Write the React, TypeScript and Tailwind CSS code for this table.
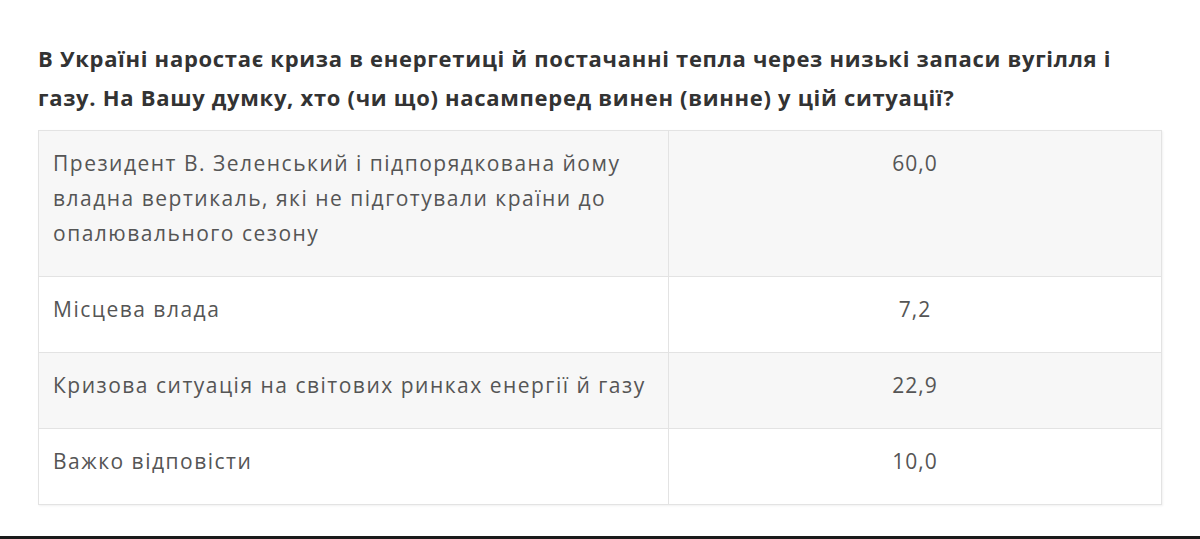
const rows = [
  {
    label: 'Президент В. Зеленський і підпорядкована йому владна вертикаль, які не підготували країни до опалювального сезону',
    value: '60,0',
  },
  { label: 'Місцева влада', value: '7,2' },
  { label: 'Кризова ситуація на світових ринках енергії й газу', value: '22,9' },
  { label: 'Важко відповісти', value: '10,0' },
]

export default function App() {
  return (
    <div className="w-[1200px] h-[539px] bg-white flex flex-col font-['Open_Sans','Liberation_Sans',sans-serif]">
      <div className="flex-1 px-[38px] pt-[39px]">
        <h2 className="text-[22px] leading-[39px] font-bold text-[#333] tracking-[0.7px]">
          В Україні наростає криза в енергетиці й постачанні тепла через низькі запаси вугілля і
          <br />
          газу. На Вашу думку, хто (чи що) насамперед винен (винне) у цій ситуації?
        </h2>
        <table className="mt-[13px] w-[1124px] border-collapse border border-[#e3e3e3] shadow-[1px_1px_2px_rgba(0,0,0,0.06)] text-[#555]">
          <tbody>
            {rows.map((r, i) => (
              <tr key={i} className={i % 2 === 0 ? 'bg-[#f7f7f7]' : 'bg-white'}>
                <td className="w-[630px] align-top border border-[#e3e3e3] pl-[14px] pr-[14px] pt-[15px] pb-[25px] text-[21px] leading-[35px] tracking-[1.5px]">
                  {r.label}
                </td>
                <td className="align-top border border-[#e3e3e3] pt-[15px] pb-[25px] text-center text-[21px] leading-[35px] tracking-[1px]">
                  {r.value}
                </td>
              </tr>
            ))}
          </tbody>
        </table>
      </div>
      <div className="h-[3px] bg-[#1a1a1a]" />
    </div>
  )
}
